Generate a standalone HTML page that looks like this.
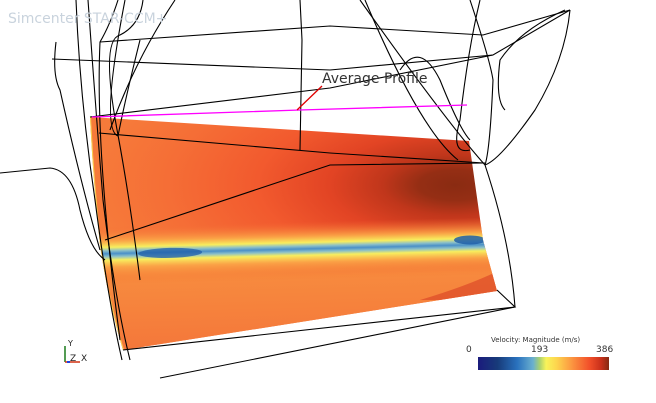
<!DOCTYPE html>
<html><head><style>
html,body{margin:0;padding:0;background:#fff;width:656px;height:403px;overflow:hidden}
svg{display:block}
text{font-family:"DejaVu Sans","Liberation Sans",sans-serif}
</style></head><body>
<svg width="656" height="403" viewBox="0 0 656 403" xmlns="http://www.w3.org/2000/svg">
<defs>
<clipPath id="pl"><path d="M90,117 L469,141 L483,240 L497,291 L123,350 Q108,300 100,245 Q93,180 90,117 Z"/></clipPath>
<radialGradient id="hot" cx="455" cy="185" r="360" gradientUnits="userSpaceOnUse" gradientTransform="translate(455 185) scale(1 0.42) translate(-455 -185)">
<stop offset="0" stop-color="#8a2b12"/><stop offset="0.1" stop-color="#952e14"/><stop offset="0.2" stop-color="#c0361b"/><stop offset="0.35" stop-color="#e24424"/><stop offset="0.55" stop-color="#f25a2e"/><stop offset="0.8" stop-color="#f56e36"/><stop offset="1" stop-color="#f67a3a"/></radialGradient>
<linearGradient id="band" x1="0" y1="222" x2="0" y2="280" gradientUnits="userSpaceOnUse">
<stop offset="0" stop-color="#f46a34" stop-opacity="0"/><stop offset="0.25" stop-color="#fba848" stop-opacity="0.9"/><stop offset="0.36" stop-color="#f8ee5e"/><stop offset="0.42" stop-color="#8cc0c8"/><stop offset="0.47" stop-color="#4a90c8"/><stop offset="0.52" stop-color="#8cc0c8"/><stop offset="0.58" stop-color="#f8ee5e"/><stop offset="0.7" stop-color="#fba848" stop-opacity="0.9"/><stop offset="1" stop-color="#f47030" stop-opacity="0"/></linearGradient>
<linearGradient id="bot" x1="0" y1="258" x2="0" y2="350" gradientUnits="userSpaceOnUse"><stop offset="0" stop-color="#f78c40" stop-opacity="0"/><stop offset="0.2" stop-color="#f78a3e"/><stop offset="1" stop-color="#f4763a"/></linearGradient>
<linearGradient id="bar" x1="0" x2="1">
<stop offset="0" stop-color="#1b1b7c"/><stop offset="0.15" stop-color="#173b7a"/><stop offset="0.3" stop-color="#2a72be"/><stop offset="0.42" stop-color="#6ab0cf"/><stop offset="0.47" stop-color="#a8d070"/><stop offset="0.52" stop-color="#f8f35a"/><stop offset="0.6" stop-color="#fdd54e"/><stop offset="0.72" stop-color="#fb9440"/><stop offset="0.85" stop-color="#f2502a"/><stop offset="0.94" stop-color="#c8301a"/><stop offset="1" stop-color="#842a12"/></linearGradient>
</defs>
<g clip-path="url(#pl)">
<rect x="80" y="110" width="430" height="250" fill="url(#hot)"/>
<g transform="rotate(-1.4 290 245)">
<rect x="70" y="250" width="440" height="110" fill="url(#bot)"/>
<rect x="70" y="222" width="440" height="58" fill="url(#band)"/>
<ellipse cx="170" cy="250" rx="32" ry="5" fill="#1f5ea8" opacity="0.75"/>
</g>
<ellipse cx="470" cy="240" rx="16" ry="4.5" fill="#1f5ea8" opacity="0.85"/>
<path d="M420,300 Q470,285 500,270 L505,300Z" fill="#d84024" opacity="0.6"/>
<path d="M90,117 Q93,180 100,245 Q108,300 123,350" stroke="#f8d050" stroke-width="2" fill="none"/>
</g>
<g fill="none" stroke="#000" stroke-width="1.1">
<path d="M100,42 L330,26 L483,35 L570,10"/>
<path d="M52,59 L330,70 L493,55 L570,10"/>
<path d="M90,117 L330,88 L493,55"/>
<path d="M99,133 L330,153 L484,163"/>
<path d="M105,240 L330,165 L485,163"/>
<path d="M0,173 L50,168 Q72,170 80,210 Q90,250 105,260"/>
<path d="M123,350 L515,307 L497,290"/>
<path d="M160,378 L515,307"/>
<path d="M76,0 Q80,100 95,200 Q108,300 122,360"/>
<path d="M88,0 Q95,100 103,200 Q115,300 130,360"/>
<path d="M118,0 Q110,25 100,42 Q95,150 120,340"/>
<path d="M56,42 Q52,75 60,90 Q80,180 100,250"/>
<path d="M143,0 Q140,25 120,35 Q100,40 118,135 Q130,200 140,280"/>
<path d="M125,0 Q100,130 118,136 Q125,100 140,40"/>
<path d="M175,0 Q135,60 110,130"/>
<path d="M360,0 Q445,120 485,165 Q510,240 515,307"/>
<path d="M365,0 Q420,130 458,160"/>
<path d="M480,0 Q468,50 460,120 Q450,155 470,150"/>
<path d="M470,0 Q490,60 493,80 Q490,150 485,165"/>
<path d="M570,10 Q565,60 535,110 Q500,160 485,165"/>
<path d="M565,10 Q520,30 500,60 Q495,100 505,110"/>
<path d="M400,70 Q420,40 440,80 Q460,130 470,140"/>
<path d="M300,0 L302,40 L300,150"/>
</g>
<path d="M92,117 L300,110 L467,105" stroke="#ff00ff" stroke-width="1.3" fill="none"/>
<path d="M297,110 L322,86" stroke="#e00000" stroke-width="1.3"/>
<text x="322" y="83" font-size="14" fill="#333">Average Profile</text>
<text x="8" y="23" font-size="14" fill="#c9d3dd" font-family="Liberation Sans,sans-serif">Simcenter STAR-CCM+</text>
<text x="491" y="342" font-size="7" fill="#333">Velocity: Magnitude (m/s)</text>
<text x="466" y="352" font-size="9" fill="#333">0</text>
<text x="531" y="352" font-size="9" fill="#333">193</text>
<text x="596" y="352" font-size="9" fill="#333">386</text>
<rect x="478" y="357" width="131" height="13" fill="url(#bar)"/>
<path d="M65,362 L65,346" stroke="#1a7a1a" stroke-width="1.5"/>
<path d="M65,362 L80,362" stroke="#d03010" stroke-width="1.5"/>
<rect x="67" y="361" width="3" height="2" fill="#2040e0"/>
<text x="68" y="346" font-size="8" fill="#222">Y</text>
<text x="70" y="361" font-size="9" fill="#222">Z</text>
<text x="81" y="361" font-size="9" fill="#222">X</text>
</svg>
</body></html>
